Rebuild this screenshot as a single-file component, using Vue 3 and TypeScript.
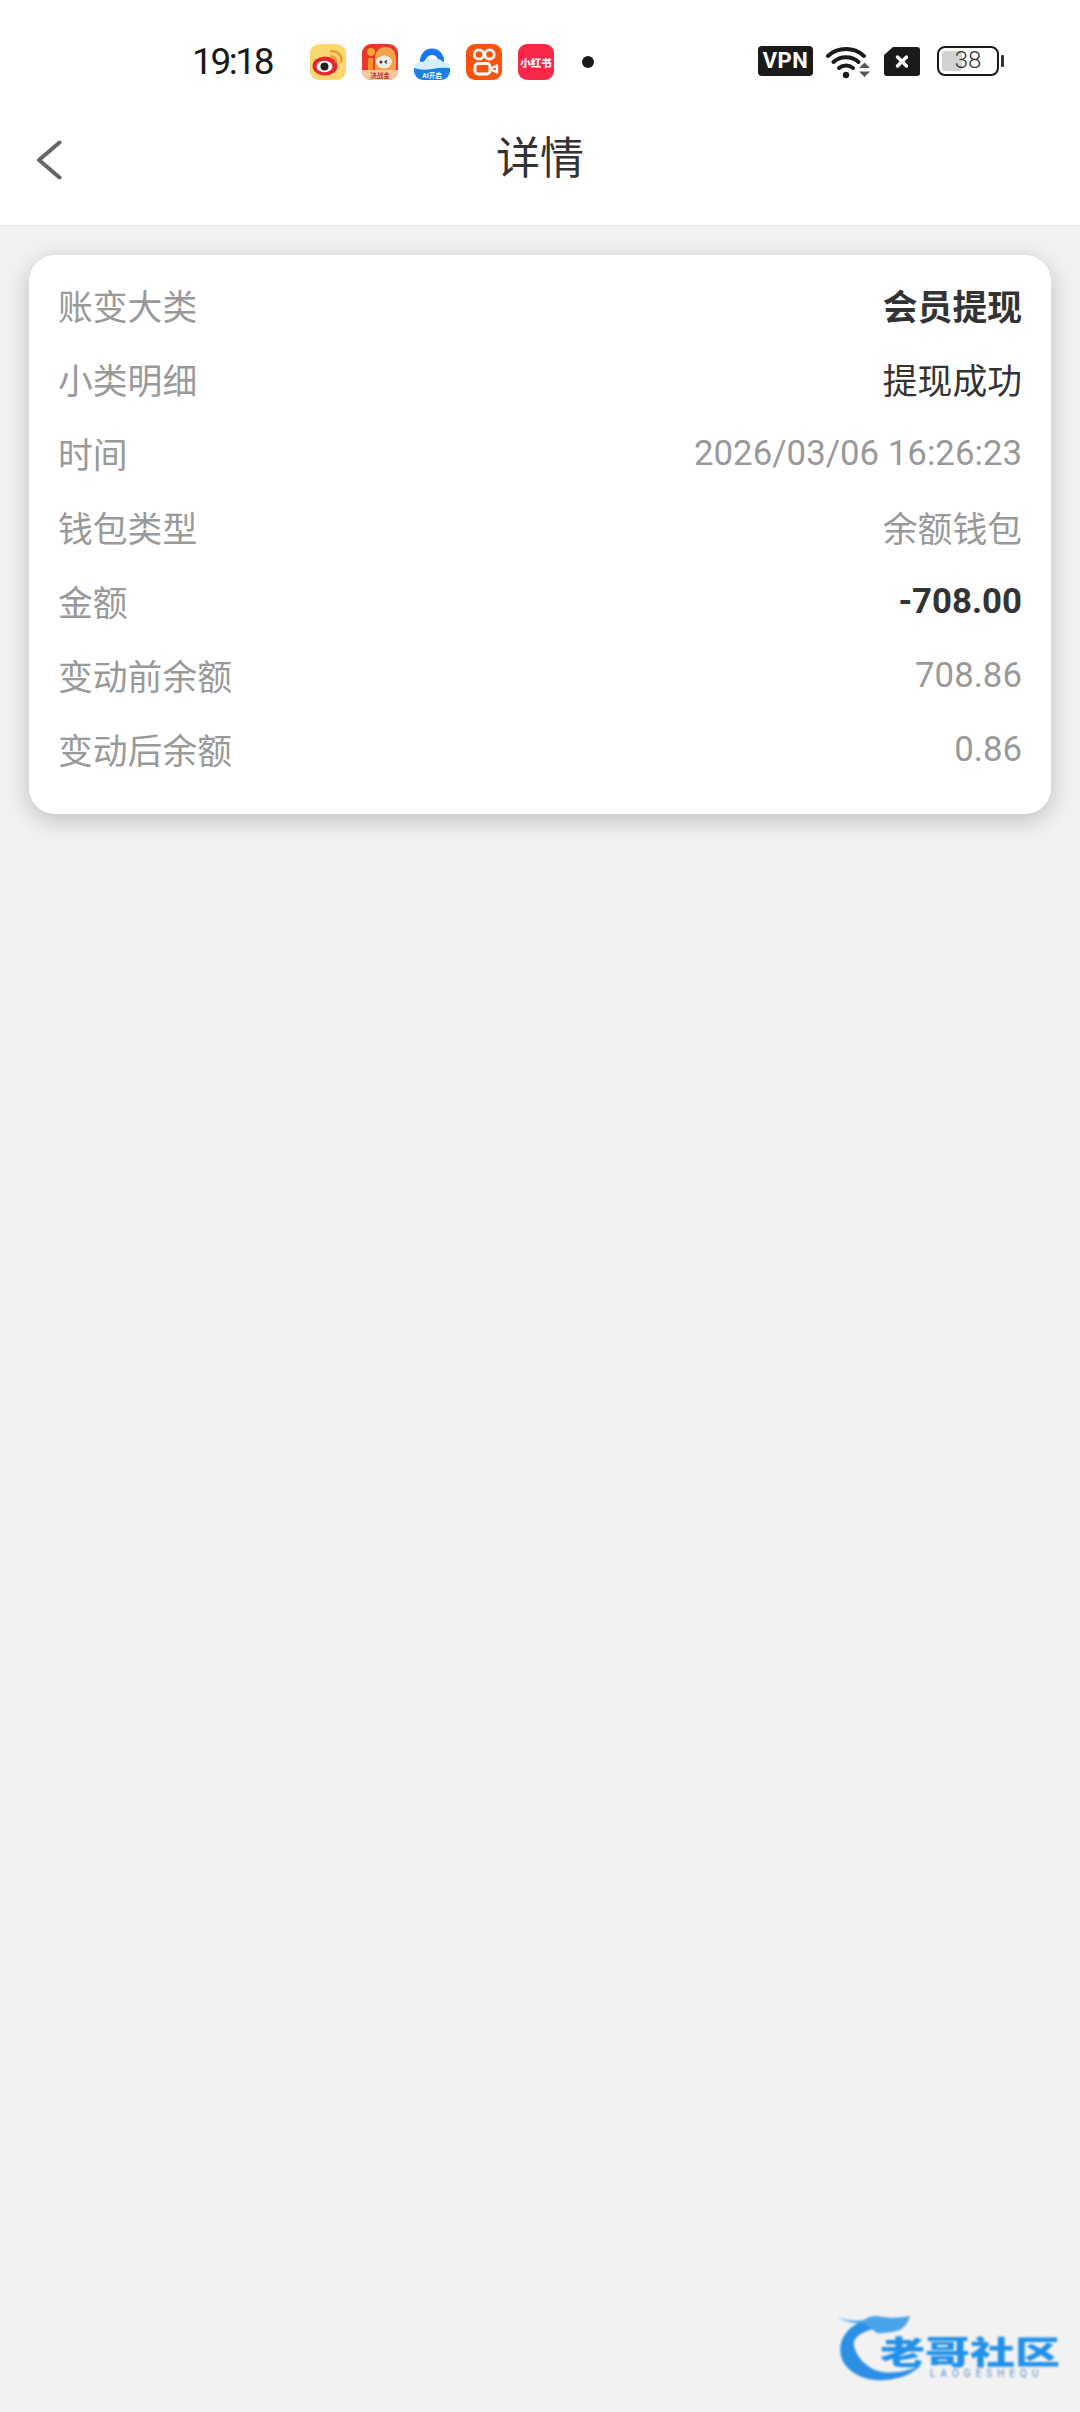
<script setup lang="ts">
interface Row {
  label: string
  value: string
  kind: 'strong' | 'dark' | 'muted'
}

const rows: Row[] = [
  { label: '账变大类', value: '会员提现', kind: 'strong' },
  { label: '小类明细', value: '提现成功', kind: 'dark' },
  { label: '时间', value: '2026/03/06 16:26:23', kind: 'muted' },
  { label: '钱包类型', value: '余额钱包', kind: 'muted' },
  { label: '金额', value: '-708.00', kind: 'strong' },
  { label: '变动前余额', value: '708.86', kind: 'muted' },
  { label: '变动后余额', value: '0.86', kind: 'muted' }
]
</script>

<template>
  <div class="page">
    <div class="statusBar">
      <span class="time">19:18</span>
      <div class="apps">
        <svg class="app" viewBox="0 0 36 36">
          <rect width="36" height="36" rx="9" fill="#fbd86f" />
          <ellipse cx="15" cy="22" rx="12.500" ry="9.500" fill="#e8262c" />
          <ellipse cx="14.500" cy="22.500" rx="8" ry="5.800" fill="#fff" />
          <circle cx="14.500" cy="22.500" r="4" fill="#222" />
          <path d="M21 7a9.500 9.500 0 0 1 10.500 10.500M21 12.500a4.500 4.500 0 0 1 5 5" fill="none" stroke="#ee9a2c" stroke-width="2.400" stroke-linecap="round" />
        </svg>
        <svg class="app" viewBox="0 0 36 36">
          <rect width="36" height="36" rx="9" fill="#e9352b" />
          <circle cx="9" cy="8" r="4" fill="#f7a52e" />
          <path d="M6 14h5v14H6z" fill="#f5922a" />
          <path d="M13 30V12q2-9 11-9t10 12v15z" fill="#f5a14a" />
          <ellipse cx="22" cy="18" rx="8" ry="6.500" fill="#f3ece2" />
          <circle cx="19" cy="18" r="1.500" fill="#333" />
          <path d="M25 16.500l-2 1.500 2 1.500" fill="none" stroke="#333" stroke-width="1.200" />
          <path d="M0 26h36v1a9 9 0 0 1-9 9H9a9 9 0 0 1-9-9z" fill="#f3c9a0" />
          <text x="18" y="34" text-anchor="middle" class="iconText" fill="#c0392b">决战金</text>
        </svg>
        <svg class="app" viewBox="0 0 36 36">
          <path d="M6.500 20a12 12 0 1 1 23 0h-5.500a6.500 6.500 0 1 0-12 0z" fill="#1678f0" />
          <path d="M0 22q4-5 9-4 4-5 10-3 7-1 10 3 5 0 7 4l-2 4H2z" fill="#d6eefb" />
          <path d="M0 24q9 3 18 1t18-1v3a9 9 0 0 1-9 9H9a9 9 0 0 1-9-9z" fill="#1a80e6" />
          <text x="18" y="33.500" text-anchor="middle" class="iconText" fill="#fff">AI开启</text>
        </svg>
        <svg class="app" viewBox="0 0 36 36">
          <rect width="36" height="36" rx="9" fill="#f7530f" />
          <circle cx="13" cy="10.500" r="4.700" fill="none" stroke="#fff" stroke-width="2.800" />
          <circle cx="23.500" cy="10.500" r="4.700" fill="none" stroke="#fff" stroke-width="2.800" />
          <rect x="9" y="19.500" width="15" height="10.500" rx="3" fill="none" stroke="#fff" stroke-width="2.800" />
          <path d="M25 24.500l6-3v7l-6-3z" fill="none" stroke="#fff" stroke-width="2.400" stroke-linejoin="round" />
        </svg>
        <svg class="app" viewBox="0 0 36 36">
          <rect width="36" height="36" rx="9" fill="#fb2748" />
          <text x="18" y="22.500" text-anchor="middle" class="iconLabel" fill="#fff">小红书</text>
        </svg>
        <span class="dot"></span>
      </div>
      <div class="indicators">
        <span class="vpn">VPN</span>
        <svg class="wifi" width="45" height="35" viewBox="0 0 45 35">
          <path d="M2 12a27 27 0 0 1 36 0" fill="none" stroke="#1a1a1a" stroke-width="4" stroke-linecap="round" />
          <path d="M7.500 18a19 19 0 0 1 25 0" fill="none" stroke="#1a1a1a" stroke-width="4" stroke-linecap="round" />
          <path d="M13 24a11 11 0 0 1 14 0" fill="none" stroke="#1a1a1a" stroke-width="4" stroke-linecap="round" />
          <circle cx="20" cy="31" r="3.200" fill="#1a1a1a" />
          <path d="M33 24l5.500-5.500 5.500 5.500zM33 27.500h11l-5.500 5.500z" fill="#555" />
        </svg>
        <svg width="36" height="29" viewBox="0 0 36 29">
          <path d="M9 0h24a3 3 0 0 1 3 3v23a3 3 0 0 1-3 3H3a3 3 0 0 1-3-3V8z" fill="#1a1a1a" />
          <path d="M13.500 10l9 9M22.500 10l-9 9" stroke="#fff" stroke-width="3.400" stroke-linecap="round" />
        </svg>
        <div class="battery">
          <div class="cell">
            <span class="fill"></span>
            <span class="level">38</span>
          </div>
          <span class="nub"></span>
        </div>
      </div>
    </div>

    <header class="navBar">
      <svg class="back" width="26" height="40" viewBox="0 0 26 40">
        <path d="M23.500 2.500L3 20l20.500 17.500" fill="none" stroke="#666" stroke-width="4" stroke-linecap="round" stroke-linejoin="round" />
      </svg>
      <div class="title">详情</div>
    </header>

    <section class="card">
      <div v-for="row in rows" :key="row.label" class="row">
        <span class="label">{{ row.label }}</span>
        <span class="value" :class="row.kind">{{ row.value }}</span>
      </div>
    </section>

    <div class="watermark">
      <svg class="dragon" width="120" height="70" viewBox="0 0 120 70">
        <path d="M22 10C6 18 0 31 3 44c4 16 24 26 44 24 16-1 29-7 36-15-10 5-24 9-38 7C30 58 19 46 16 34c-2-8 8-15 23-18z" fill="#2b8fe6" />
        <path d="M0 6q14 4 26 2 8-6 18-3 14 2 28-1-2 9-10 14-12 4-23 3-8-6-14-10Q12 12 0 6z" fill="#4aa3ea" />
      </svg>
      <div class="mark">
        <div class="markName">老哥社区</div>
        <div class="markSub">LAOGESHEQU</div>
      </div>
    </div>
  </div>
</template>

<style scoped>
.page {
  position: relative;
  width: 1080px;
  height: 2412px;
  overflow: hidden;
  background: #f2f2f2;
  font-family: Roboto, "Noto Sans CJK SC", sans-serif;
  color: #333;
}

.statusBar {
  height: 124px;
  box-sizing: border-box;
  padding: 44px 76px 0 192px;
  background: #fff;
  display: flex;
  align-items: flex-start;
}

.time {
  width: 118px;
  font-size: 37px;
  line-height: 36px;
  letter-spacing: -2.400px;
  color: #1a1a1a;
}

.apps {
  display: flex;
  align-items: center;
  gap: 16px;
}

.app {
  width: 36px;
  height: 36px;
  display: block;
}

.iconText {
  font-size: 6.500px;
  font-weight: 700;
}

.iconLabel {
  font-size: 10.500px;
  font-weight: 900;
}

.dot {
  width: 12px;
  height: 12px;
  margin-left: 12px;
  border-radius: 50%;
  background: #1a1a1a;
}

.indicators {
  margin: 1px 0 0 auto;
  display: flex;
  align-items: center;
  gap: 13px;
  height: 32px;
}

.vpn {
  width: 55px;
  height: 30px;
  border-radius: 4px;
  background: #1a1a1a;
  color: #fff;
  font-size: 22px;
  font-weight: 700;
  line-height: 30px;
  text-align: center;
  letter-spacing: 0.500px;
}

.battery {
  margin-left: 4px;
  display: flex;
  align-items: center;
  gap: 2px;
}

.cell {
  position: relative;
  width: 62px;
  height: 30px;
  box-sizing: border-box;
  border: 2.500px solid #1a1a1a;
  border-radius: 8px;
  overflow: hidden;
  text-align: center;
}

.fill {
  position: absolute;
  left: 3px;
  top: 3px;
  bottom: 3px;
  width: 20px;
  border-radius: 3px;
  background: #d2d2d2;
}

.level {
  position: relative;
  display: block;
  font-size: 24px;
  font-weight: 300;
  line-height: 25px;
  color: #333;
}

.nub {
  width: 3px;
  height: 12px;
  border-radius: 1px;
  background: #333;
}

.navBar {
  position: relative;
  height: 101px;
  background: #fff;
  border-bottom: 1px solid #e6e6e6;
  display: flex;
  align-items: flex-start;
  justify-content: center;
}

.back {
  position: absolute;
  left: 36px;
  top: 16px;
}

.title {
  font-size: 44px;
  line-height: 71px;
  color: #333;
}

.card {
  margin: 29px 29px 0;
  padding: 13px 29px 28px;
  background: #fff;
  border-radius: 26px;
  box-shadow: 0 6px 24px rgba(0, 0, 0, 0.22);
}

.row {
  height: 74px;
  display: flex;
  align-items: center;
  justify-content: space-between;
  font-size: 34.800px;
}

.label {
  color: #999;
}

.muted {
  color: #999;
}

.dark {
  color: #333;
}

.strong {
  color: #333;
  font-weight: 700;
}

.watermark {
  position: absolute;
  left: 838px;
  top: 2312px;
  width: 230px;
  height: 72px;
  filter: blur(0.800px);
}

.dragon {
  position: absolute;
  left: 0;
  top: 0;
}

.mark {
  position: absolute;
  left: 42px;
  top: 21px;
  color: #2090e8;
}

.markName {
  font-family: "Noto Sans CJK SC", sans-serif;
  font-size: 45px;
  font-weight: 900;
  line-height: 34px;
  white-space: nowrap;
  transform: scaleY(0.72);
}

.markSub {
  margin: 1px 0 0 50px;
  font-size: 10px;
  line-height: 12px;
  letter-spacing: 5px;
  white-space: nowrap;
  color: #5a8fc8;
}
</style>

<style>
html,
body {
  margin: 0;
  background: #f2f2f2;
}
</style>
